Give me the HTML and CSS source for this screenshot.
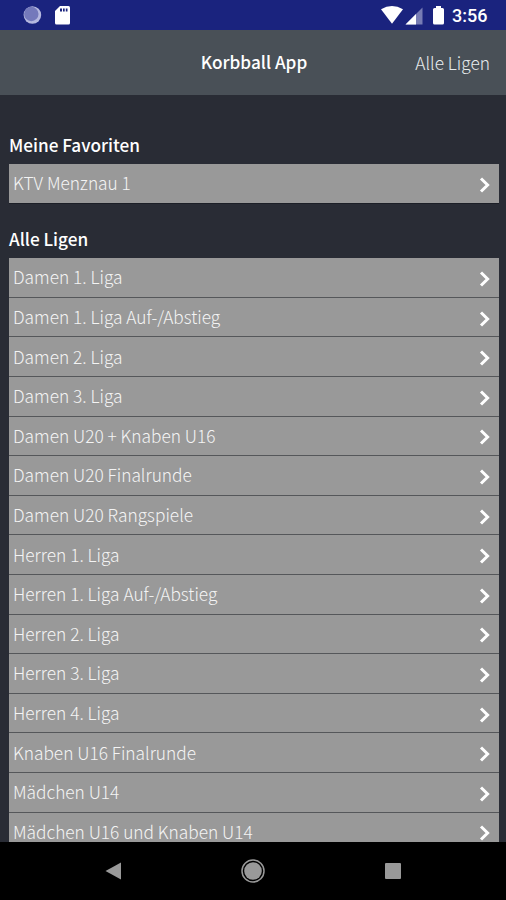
FILE: index.html
```html
<!DOCTYPE html>
<html lang="de">
<head>
<meta charset="utf-8">
<title>Korbball App</title>
<link rel="stylesheet" href="styles.css">
</head>
<body>
<svg class="defs" width="0" height="0"><symbol id="chevron" viewBox="0 0 12 16"><path d="M2 1.500 8.600 8 2 14.500" fill="none" stroke="currentColor" stroke-width="3"/></symbol></svg>
<div class="status">
  <svg class="status-left" width="60" height="30" viewBox="0 0 60 30"><circle cx="12.4" cy="15" r="8.800" fill="#b5b8df"/><circle cx="11.3" cy="14" r="7.200" fill="#7479bb"/><path d="M40 6h8.500q1.500 0 1.500 1.500v15.500q0 1.500-1.500 1.500h-12q-1.500 0-1.500-1.500V11z" fill="#fff"/><path d="M40 8.500h2v3h-2zM43 8.500h1.700v3H43zM45.800 8.500h1.700v3h-1.700z" fill="#1a237e"/></svg>
  <svg class="status-right" width="70" height="30" viewBox="0 0 70 30"><path d="M1 9.200Q12 2.800 23 9.200L12 23.800z" fill="#fff"/><path d="M42.500 7.500v17h-17z" fill="#777cb4"/><path d="M36 14v10.500H25.500z" fill="#fff"/><path d="M56 6h5v2h1.500q1.500 0 1.500 1.500V23q0 1.500-1.500 1.500h-8Q53 24.500 53 23V9.500Q53 8 54.500 8H56z" fill="#fff"/></svg>
  <span class="clock">3:56</span>
</div>
<header class="bar">
  <h1>Korbball App</h1>
  <a class="action">Alle Ligen</a>
</header>
<main class="content">
  <h2>Meine Favoriten</h2>
  <ul class="list favorites">
    <li><span>KTV Menznau 1</span><svg><use href="#chevron"/></svg></li>
  </ul>
  <h2>Alle Ligen</h2>
  <ul class="list">
    <li><span>Damen 1. Liga</span><svg><use href="#chevron"/></svg></li>
    <li><span>Damen 1. Liga Auf-/Abstieg</span><svg><use href="#chevron"/></svg></li>
    <li><span>Damen 2. Liga</span><svg><use href="#chevron"/></svg></li>
    <li><span>Damen 3. Liga</span><svg><use href="#chevron"/></svg></li>
    <li><span>Damen U20 + Knaben U16</span><svg><use href="#chevron"/></svg></li>
    <li><span>Damen U20 Finalrunde</span><svg><use href="#chevron"/></svg></li>
    <li><span>Damen U20 Rangspiele</span><svg><use href="#chevron"/></svg></li>
    <li><span>Herren 1. Liga</span><svg><use href="#chevron"/></svg></li>
    <li><span>Herren 1. Liga Auf-/Abstieg</span><svg><use href="#chevron"/></svg></li>
    <li><span>Herren 2. Liga</span><svg><use href="#chevron"/></svg></li>
    <li><span>Herren 3. Liga</span><svg><use href="#chevron"/></svg></li>
    <li><span>Herren 4. Liga</span><svg><use href="#chevron"/></svg></li>
    <li><span>Knaben U16 Finalrunde</span><svg><use href="#chevron"/></svg></li>
    <li><span>Mädchen U14</span><svg><use href="#chevron"/></svg></li>
    <li><span>Mädchen U16 und Knaben U14</span><svg><use href="#chevron"/></svg></li>
  </ul>
</main>
<nav class="nav">
  <svg width="24" height="24" viewBox="0 0 24 24"><path d="M4.500 12 20 3.500v17z" fill="#999"/></svg>
  <svg width="24" height="24" viewBox="0 0 24 24"><circle cx="12" cy="12" r="11" fill="none" stroke="#999" stroke-width="1.500"/><circle cx="12" cy="12" r="8.800" fill="#999"/></svg>
  <svg width="24" height="24" viewBox="0 0 24 24"><rect x="4" y="4" width="16" height="16" rx="1" fill="#999"/></svg>
</nav>
</body>
</html>
```
FILE: styles.css
```css
* { box-sizing: border-box; margin: 0; padding: 0; }
body {
  display: flex;
  flex-direction: column;
  height: 900px;
  overflow: hidden;
  background: #292c35;
  color: #fff;
  font-family: "Noto Sans CJK JP", "Noto Sans", sans-serif;
  font-size: 17.3px;
}
svg { display: block; flex: none; }
.defs { display: none; }
.status {
  display: flex;
  flex: none;
  align-items: center;
  height: 30px;
  padding: 0 17px 0 20px;
  background: #1a237e;
}
.status-right { margin-left: auto; }
.clock {
  width: 37px;
  margin-left: 2px;
  font: 500 18px/30px Roboto, sans-serif;
  white-space: nowrap;
  padding-top: 1px;
}
.bar {
  display: grid;
  grid-template-columns: 1fr auto 1fr;
  flex: none;
  align-items: center;
  height: 65px;
  padding: 0 16px 2px;
  background: #495057;
  line-height: 30px;
}
h1 { grid-column: 2; padding-left: 2px; font-size: 17.2px; font-weight: 500; }
.action { justify-self: end; font-weight: 300; color: #e8ecee; padding-top: 2px; }
.content {
  flex: 1;
  min-height: 0;
  overflow: hidden;
  padding: 36px 7px 0 9px;
}
h2 { height: 33px; font-size: 17.2px; line-height: 27px; font-weight: 500; }
.list { list-style: none; }
.favorites { margin-bottom: 21.6px; }
.list li {
  display: flex;
  align-items: center;
  justify-content: space-between;
  height: 39.6px;
  padding: 0 8px 0 4px;
  border-bottom: 1.400px solid #55575a;
  background: #999;
  color: #f4f4f4;
  font-weight: 300;
  line-height: 36px;
}
.list.favorites li { border-bottom-color: #1c1f27; }
.list span { padding-bottom: 0; }
.list svg { width: 12px; height: 16px; color: #fff; position: relative; top: 1.500px; }
.nav {
  display: flex;
  flex: none;
  align-items: center;
  justify-content: space-between;
  height: 58px;
  padding: 0 101px;
  background: #000;
}
```
